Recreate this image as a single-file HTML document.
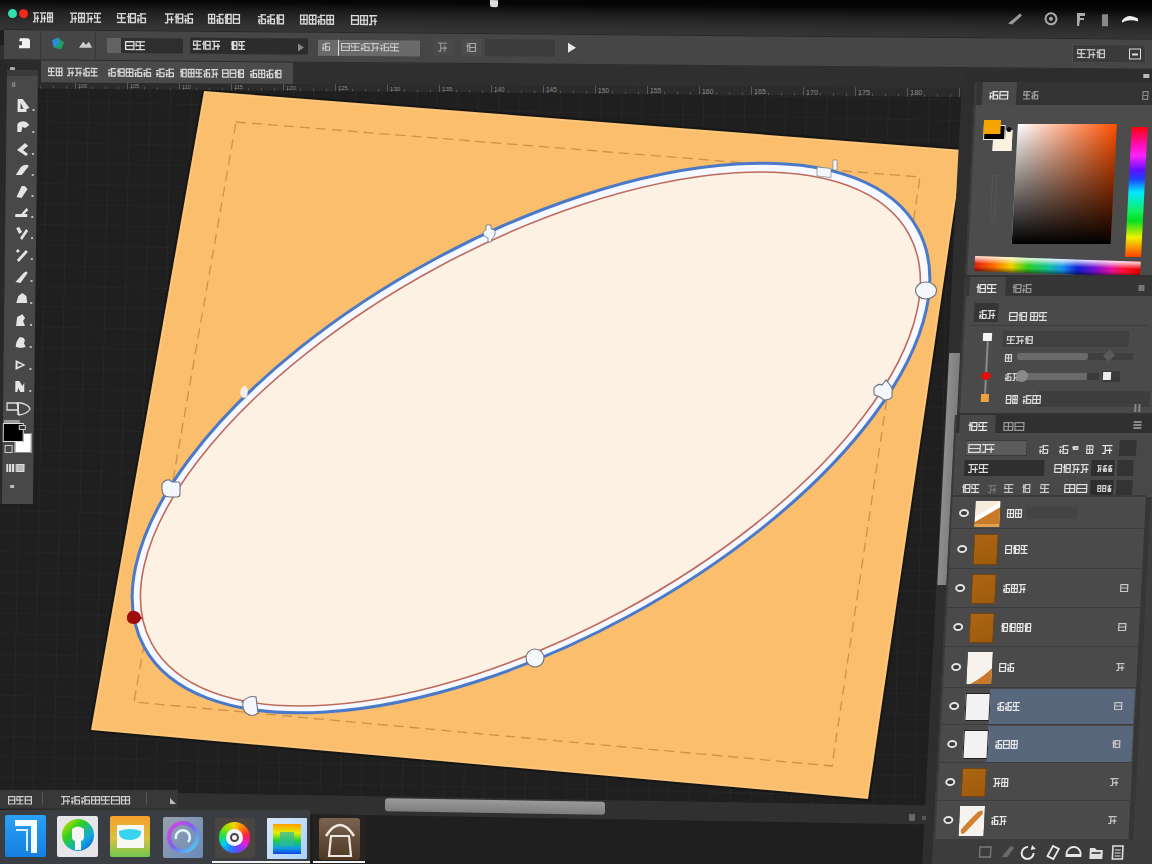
<!DOCTYPE html>
<html><head><meta charset="utf-8">
<style>
*{margin:0;padding:0;box-sizing:border-box}
html,body{width:1152px;height:864px;overflow:hidden;background:#1f1f1f;font-family:"Liberation Sans",sans-serif;color:#ddd}
.a{position:absolute}
.t{position:absolute;font-size:10px;font-weight:bold;color:#d8d8d8;white-space:nowrap;line-height:12px;letter-spacing:-0.2px}
</style></head><body>
<!-- canvas svg -->
<svg class="a" style="left:0;top:0" width="1152" height="864" viewBox="0 0 1152 864">
  <defs>
    <pattern id="grid" width="20.5" height="20.5" patternUnits="userSpaceOnUse" x="9.2" y="19" patternTransform="rotate(1.2)">
      <path d="M20.5 0V20.5M0 20.5H20.5" stroke="#2a2a2a" stroke-width="1.2" fill="none"/>
    </pattern>
  </defs>
  <rect x="0" y="0" width="1152" height="864" fill="#1f1f1f"/>
  <rect x="0" y="90" width="968" height="720" fill="url(#grid)"/>
  <!-- orange paper -->
  <polygon points="204,91 963,150 868,799 91,730" fill="none" stroke="#161616" stroke-width="4"/>
  <polygon points="204,91 963,150 868,799 91,730" fill="#fabe6c"/>
  <polygon points="205,92.5 961.5,151.3 866.8,797.6 92.6,729" fill="none" stroke="#fdd08c" stroke-width="1" stroke-opacity="0.7"/>
  <polygon points="236,122 920,177 832,766 134,702" fill="none" stroke="#c88845" stroke-width="1.3" stroke-dasharray="10,6" stroke-opacity="0.85"/>
  <!-- ellipse -->
  <g transform="translate(531,438) rotate(-28.35)">
    <ellipse cx="0" cy="0" rx="439.7" ry="203.1" fill="#f6f9ff" stroke="#4a79c9" stroke-width="3"/>
    <ellipse cx="-1" cy="0.6" rx="430.4" ry="195.2" fill="#fdf1e3" stroke="#c06a5c" stroke-width="1.6"/>
  </g>
  <!-- handles -->
  <g fill="#f4f8fd" stroke="#6d7280" stroke-width="1.1">
    <ellipse cx="926" cy="290.5" rx="10.5" ry="8.5"/>
    <circle cx="535" cy="658" r="9"/>
    <path d="M242,702 q7,-7 14,-5 l2,16 q-6,5 -12,0 q-4,-4 -3,-11 z"/>
    <path d="M162,484 q3,-5 8,-4 q1,2 3,2 h5 q2,0 2,2 v10 q0,3 -3,3 h-7 q-8,0 -8,-8 z"/>
    <path d="M874,388 q4,-5 8,-3 l4,-5 l4,5 q3,3 2,8 l0,4 q-2,3 -8,3 q-4,-3 -6,-4 q-4,0 -4,-3 z"/>
    <path d="M486,225 h5 v4 l4,1 v5 l-3,4 l-1,3 h-3 l0,-4 l-4,-2 l-1,-4 l3,-2 z" stroke-width="0.8"/>
    <path d="M241,389 l4,-4 l3,5 l-1,7 l-4,1 l-3,-4 z" stroke="none" fill="#f2eee8"/>
    <path d="M817,167 l14,1.5 l0,9 l-14,-1.5 z" stroke-width="0.6"/>
    <path d="M833,160 l4,0 l0,10 l-4,0 z" stroke-width="0.6"/>
  </g>
  <path d="M127,616 q2,-6 8,-5 q5,1 6,6 l2,1 l-2,1 q-2,5 -7,5 q-8,0 -7,-8 z" fill="#a00c0c"/>
</svg>

<!-- tab row + ruler (skewed) -->
<div class="a" style="left:0;top:0;width:1152px;height:100px;transform:skewY(0.55deg);transform-origin:0 0">
<div class="a" style="left:0;top:45px;width:1152px;height:37px;background:#2f2f2f"></div>
<div class="a" style="left:0;top:59px;width:41px;height:23px;background:#2a2a2a"></div>
<div class="a" style="left:41px;top:59px;width:252px;height:23px;background:#4a4a4a"></div>
<svg class="a" style="left:48px;top:66.5px;overflow:visible" width="15" height="8"><path d="M0.6,0.6H6.2M1.1,4.2H5.8M0.6,8.0H6.2M3.4,0.6V8.0M0.6,2.2V4.4M8.3,0.6H14.0M8.3,8.0H14.0M8.3,0.6V8.0M14.0,0.6V8.0M8.3,4.2H14.0M11.2,0.6V8.0" fill="none" stroke="#d8d8d8" stroke-width="1.21" stroke-opacity="1.0" stroke-linecap="square"/></svg><svg class="a" style="left:67px;top:66.5px;overflow:visible" width="31" height="8"><path d="M0.6,0.6H6.4M2.1,0.6V8.0M5.2,3.1V8.0M2.1,5.1H6.4M0.6,8.0H2.1M8.5,0.6H14.2M10.0,0.6V8.0M13.1,3.1V8.0M10.0,5.1H14.2M8.5,8.0H10.0M16.4,2.1H17.6M16.4,5.9H17.6M17.0,4.2V8.0M18.6,0.6H22.2M19.1,0.6V8.0M18.6,4.2H22.2M22.2,4.2V8.0M18.6,8.0H22.2M24.3,0.6H30.1M24.8,4.2H29.6M24.3,8.0H30.1M27.2,0.6V8.0M24.3,2.2V4.4" fill="none" stroke="#d8d8d8" stroke-width="1.21" stroke-opacity="1.0" stroke-linecap="square"/></svg><svg class="a" style="left:107.7px;top:66.5px;overflow:visible" width="43" height="8"><path d="M0.6,2.1H2.1M0.6,5.9H2.1M1.1,4.2V8.0M3.1,0.6H7.2M3.6,0.6V8.0M3.1,4.2H7.2M7.2,4.2V8.0M3.1,8.0H7.2M10.2,0.6V8.0M9.4,3.0H10.8M11.8,0.6H16.1M11.8,8.0H16.1M11.8,0.6V8.0M16.1,0.6V8.0M11.8,4.2H16.1M18.2,0.6H24.9M18.2,8.0H24.9M18.2,0.6V8.0M24.9,0.6V8.0M18.2,4.2H24.9M21.5,0.6V8.0M27.0,2.1H28.5M27.0,5.9H28.5M27.6,4.2V8.0M29.5,0.6H33.7M30.0,0.6V8.0M29.5,4.2H33.7M33.7,4.2V8.0M29.5,8.0H33.7M35.8,2.1H37.3M35.8,5.9H37.3M36.4,4.2V8.0M38.3,0.6H42.5M38.8,0.6V8.0M38.3,4.2H42.5M42.5,4.2V8.0M38.3,8.0H42.5" fill="none" stroke="#d8d8d8" stroke-width="1.21" stroke-opacity="1.0" stroke-linecap="square"/></svg><svg class="a" style="left:156px;top:66.5px;overflow:visible" width="18" height="8"><path d="M0.6,2.1H2.4M0.6,5.9H2.4M1.1,4.2V8.0M3.4,0.6H8.0M3.9,0.6V8.0M3.4,4.2H8.0M8.0,4.2V8.0M3.4,8.0H8.0M10.1,2.1H11.9M10.1,5.9H11.9M10.7,4.2V8.0M12.9,0.6H17.4M13.4,0.6V8.0M12.9,4.2H17.4M17.4,4.2V8.0M12.9,8.0H17.4" fill="none" stroke="#d8d8d8" stroke-width="1.21" stroke-opacity="1.0" stroke-linecap="square"/></svg><svg class="a" style="left:180px;top:66.5px;overflow:visible" width="38" height="8"><path d="M1.2,0.6V8.0M0.6,3.0H1.6M2.6,0.6H6.2M2.6,8.0H6.2M2.6,0.6V8.0M6.2,0.6V8.0M2.6,4.2H6.2M8.3,0.6H14.0M8.3,8.0H14.0M8.3,0.6V8.0M14.0,0.6V8.0M8.3,4.2H14.0M11.2,0.6V8.0M16.1,0.6H21.8M16.6,4.2H21.3M16.1,8.0H21.8M19.0,0.6V8.0M16.1,2.2V4.4M23.9,2.1H25.1M23.9,5.9H25.1M24.6,4.2V8.0M26.1,0.6H29.6M26.6,0.6V8.0M26.1,4.2H29.6M29.6,4.2V8.0M26.1,8.0H29.6M31.8,0.6H37.5M33.2,0.6V8.0M36.3,3.1V8.0M33.2,5.1H37.5M31.8,8.0H33.2" fill="none" stroke="#d8d8d8" stroke-width="1.21" stroke-opacity="1.0" stroke-linecap="square"/></svg><svg class="a" style="left:222px;top:66.5px;overflow:visible" width="22" height="8"><path d="M0.6,0.6H6.1M0.6,8.0H6.1M0.6,0.6V8.0M6.1,0.6V8.0M0.6,4.2H6.1M8.2,0.6H13.8M8.2,8.0H13.8M8.2,0.6V8.0M13.8,0.6V8.0M8.2,4.2H13.8M16.5,0.6V8.0M15.9,3.0H16.9M17.9,0.6H21.4M17.9,8.0H21.4M17.9,0.6V8.0M21.4,0.6V8.0M17.9,4.2H21.4" fill="none" stroke="#d8d8d8" stroke-width="1.21" stroke-opacity="1.0" stroke-linecap="square"/></svg><svg class="a" style="left:250px;top:66.5px;overflow:visible" width="32" height="8"><path d="M0.6,2.1H1.9M0.6,5.9H1.9M1.1,4.2V8.0M2.9,0.6H6.6M3.4,0.6V8.0M2.9,4.2H6.6M6.6,4.2V8.0M2.9,8.0H6.6M8.7,0.6H14.7M8.7,8.0H14.7M8.7,0.6V8.0M14.7,0.6V8.0M8.7,4.2H14.7M11.7,0.6V8.0M16.8,2.1H18.1M16.8,5.9H18.1M17.4,4.2V8.0M19.1,0.6H22.8M19.6,0.6V8.0M19.1,4.2H22.8M22.8,4.2V8.0M19.1,8.0H22.8M25.7,0.6V8.0M24.9,3.0H26.1M27.1,0.6H30.9M27.1,8.0H30.9M27.1,0.6V8.0M30.9,0.6V8.0M27.1,4.2H30.9" fill="none" stroke="#d8d8d8" stroke-width="1.21" stroke-opacity="1.0" stroke-linecap="square"/></svg>
<div class="a" style="left:10px;top:67px;width:5px;height:5px;background:#aaa"></div>
</div>
<svg class="a" style="left:0;top:0" width="1152" height="110"><polygon points="38,82.5 968,88.0 968,97.0 38,88.5" fill="#2b2b2b"/><path d="M40.5,86.0V88.5M53.5,86.1V88.6M66.5,86.3V88.8M79.5,86.4V88.9M92.5,86.5V89.0M105.5,86.6V89.1M118.5,86.7V89.2M131.5,86.8V89.3M144.5,87.0V89.5M157.5,87.1V89.6M170.5,87.2V89.7M183.5,87.3V89.8M196.5,87.4V89.9M209.5,87.6V90.1M222.5,87.7V90.2M235.5,87.8V90.3M248.5,87.9V90.4M261.5,88.0V90.5M274.5,88.2V90.7M287.5,88.3V90.8M300.5,88.4V90.9M313.5,88.5V91.0M326.5,88.6V91.1M339.5,88.8V91.3M352.5,88.9V91.4M365.5,89.0V91.5M378.5,89.1V91.6M391.5,89.2V91.7M404.5,89.3V91.8M417.5,89.5V92.0M430.5,89.6V92.1M443.5,89.7V92.2M456.5,89.8V92.3M469.5,89.9V92.4M482.5,90.1V92.6M495.5,90.2V92.7M508.5,90.3V92.8M521.5,90.4V92.9M534.5,90.5V93.0M547.5,90.7V93.2M560.5,90.8V93.3M573.5,90.9V93.4M586.5,91.0V93.5M599.5,91.1V93.6M612.5,91.2V93.7M625.5,91.4V93.9M638.5,91.5V94.0M651.5,91.6V94.1M664.5,91.7V94.2M677.5,91.8V94.3M690.5,92.0V94.5M703.5,92.1V94.6M716.5,92.2V94.7M729.5,92.3V94.8M742.5,92.4V94.9M755.5,92.6V95.1M768.5,92.7V95.2M781.5,92.8V95.3M794.5,92.9V95.4M807.5,93.0V95.5M820.5,93.1V95.6M833.5,93.3V95.8M846.5,93.4V95.9M859.5,93.5V96.0M872.5,93.6V96.1M885.5,93.7V96.2M898.5,93.9V96.4M911.5,94.0V96.5M924.5,94.1V96.6M937.5,94.2V96.7M950.5,94.3V96.8M963.5,94.5V97.0" stroke="#505050" stroke-width="1"/><path d="M75.5,82.7V88.8M127.5,83.0V89.3M179.5,83.3V89.8M231.5,83.6V90.3M283.5,83.9V90.7M335.5,84.3V91.2M387.5,84.6V91.7M439.5,84.9V92.2M491.5,85.2V92.6M543.5,85.5V93.1M595.5,85.8V93.6M647.5,86.1V94.1M699.5,86.4V94.5M751.5,86.7V95.0M803.5,87.0V95.5M855.5,87.3V96.0M907.5,87.6V96.4M959.5,87.9V96.9" stroke="#5a5a5a" stroke-width="1"/><text x="78" y="87.8" font-family="Liberation Sans" font-size="5.5" fill="#8a8a8a">100</text><text x="130" y="88.3" font-family="Liberation Sans" font-size="5.5" fill="#8a8a8a">105</text><text x="182" y="88.8" font-family="Liberation Sans" font-size="5.5" fill="#8a8a8a">110</text><text x="234" y="89.3" font-family="Liberation Sans" font-size="5.6" fill="#8a8a8a">115</text><text x="286" y="89.7" font-family="Liberation Sans" font-size="5.8" fill="#8a8a8a">120</text><text x="338" y="90.2" font-family="Liberation Sans" font-size="5.9" fill="#8a8a8a">125</text><text x="390" y="90.7" font-family="Liberation Sans" font-size="6.1" fill="#8a8a8a">130</text><text x="442" y="91.2" font-family="Liberation Sans" font-size="6.2" fill="#8a8a8a">135</text><text x="494" y="91.6" font-family="Liberation Sans" font-size="6.3" fill="#8a8a8a">140</text><text x="546" y="92.1" font-family="Liberation Sans" font-size="6.5" fill="#8a8a8a">145</text><text x="598" y="92.6" font-family="Liberation Sans" font-size="6.6" fill="#8a8a8a">150</text><text x="650" y="93.1" font-family="Liberation Sans" font-size="6.8" fill="#8a8a8a">155</text><text x="702" y="93.5" font-family="Liberation Sans" font-size="6.9" fill="#8a8a8a">160</text><text x="754" y="94.0" font-family="Liberation Sans" font-size="7.1" fill="#8a8a8a">165</text><text x="806" y="94.5" font-family="Liberation Sans" font-size="7.2" fill="#8a8a8a">170</text><text x="858" y="95.0" font-family="Liberation Sans" font-size="7.3" fill="#8a8a8a">175</text><text x="910" y="95.4" font-family="Liberation Sans" font-size="7.5" fill="#8a8a8a">180</text><text x="962" y="95.9" font-family="Liberation Sans" font-size="7.6" fill="#8a8a8a">185</text></svg>
<!-- top group skewed -->
<div class="a" style="left:0;top:0;width:1152px;height:60px;transform:skewY(0.48deg);transform-origin:0 0">
<div class="a" style="left:0;top:-12px;width:1152px;height:42px;background:linear-gradient(#000 0%,#060606 28%,#1e1e1e 52%,#2e2e2e 78%,#363636 100%)"></div>
<div class="a" style="left:7.5px;top:8.5px;width:9px;height:9px;border-radius:50%;background:#2fe0b0"></div>
<div class="a" style="left:19px;top:8.5px;width:9px;height:9px;border-radius:50%;background:#f0281e"></div>
<svg class="a" style="left:33px;top:11.5px;overflow:visible" width="20" height="10"><path d="M0.6,0.6H5.4M1.8,0.6V9.4M4.5,3.6V9.4M1.8,6.0H5.4M0.6,9.4H1.8M7.6,0.6H12.4M8.8,0.6V9.4M11.5,3.6V9.4M8.8,6.0H12.4M7.6,9.4H8.8M14.6,0.6H19.4M14.6,9.4H19.4M14.6,0.6V9.4M19.4,0.6V9.4M14.6,5.0H19.4M17.0,0.6V9.4" fill="none" stroke="#d8d8d8" stroke-width="1.37" stroke-opacity="1.0" stroke-linecap="square"/></svg>
<svg class="a" style="left:70px;top:11.5px;overflow:visible" width="31" height="10"><path d="M0.6,0.6H6.4M2.1,0.6V9.4M5.2,3.6V9.4M2.1,6.0H6.4M0.6,9.4H2.1M8.6,0.6H14.4M8.6,9.4H14.4M8.6,0.6V9.4M14.4,0.6V9.4M8.6,5.0H14.4M11.5,0.6V9.4M16.6,0.6H22.4M18.1,0.6V9.4M21.2,3.6V9.4M18.1,6.0H22.4M16.6,9.4H18.1M24.6,0.6H30.4M25.1,5.0H29.9M24.6,9.4H30.4M27.5,0.6V9.4M24.6,2.6V5.1" fill="none" stroke="#d8d8d8" stroke-width="1.37" stroke-opacity="1.0" stroke-linecap="square"/></svg>
<svg class="a" style="left:117px;top:11.5px;overflow:visible" width="29" height="10"><path d="M0.6,0.6H8.4M1.1,5.0H7.9M0.6,9.4H8.4M4.5,0.6V9.4M0.6,2.6V5.1M11.6,0.6V9.4M10.6,3.5H12.4M13.4,0.6H18.4M13.4,9.4H18.4M13.4,0.6V9.4M18.4,0.6V9.4M13.4,5.0H18.4M20.6,2.5H22.6M20.6,7.0H22.6M21.2,5.0V9.4M23.6,0.6H28.4M24.1,0.6V9.4M23.6,5.0H28.4M28.4,5.0V9.4M23.6,9.4H28.4" fill="none" stroke="#d8d8d8" stroke-width="1.37" stroke-opacity="1.0" stroke-linecap="square"/></svg>
<svg class="a" style="left:165px;top:11.5px;overflow:visible" width="28" height="10"><path d="M0.6,0.6H8.0M2.6,0.6V9.4M6.5,3.6V9.4M2.6,6.0H8.0M0.6,9.4H2.6M11.2,0.6V9.4M10.3,3.5H12.0M13.0,0.6H17.7M13.0,9.4H17.7M13.0,0.6V9.4M17.7,0.6V9.4M13.0,5.0H17.7M20.0,2.5H21.8M20.0,7.0H21.8M20.6,5.0V9.4M22.8,0.6H27.4M23.3,0.6V9.4M22.8,5.0H27.4M27.4,5.0V9.4M22.8,9.4H27.4" fill="none" stroke="#d8d8d8" stroke-width="1.37" stroke-opacity="1.0" stroke-linecap="square"/></svg>
<svg class="a" style="left:208px;top:11.5px;overflow:visible" width="32" height="10"><path d="M0.6,0.6H6.6M0.6,9.4H6.6M0.6,0.6V9.4M6.6,0.6V9.4M0.6,5.0H6.6M3.6,0.6V9.4M8.9,2.5H10.2M8.9,7.0H10.2M9.5,5.0V9.4M11.2,0.6H14.9M11.7,0.6V9.4M11.2,5.0H14.9M14.9,5.0V9.4M11.2,9.4H14.9M17.8,0.6V9.4M17.1,3.5H18.3M19.3,0.6H23.1M19.3,9.4H23.1M19.3,0.6V9.4M23.1,0.6V9.4M19.3,5.0H23.1M25.4,0.6H31.4M25.4,9.4H31.4M25.4,0.6V9.4M31.4,0.6V9.4M25.4,5.0H31.4" fill="none" stroke="#d8d8d8" stroke-width="1.37" stroke-opacity="1.0" stroke-linecap="square"/></svg>
<svg class="a" style="left:258px;top:11.5px;overflow:visible" width="26" height="10"><path d="M0.6,2.5H2.2M0.6,7.0H2.2M1.2,5.0V9.4M3.2,0.6H7.4M3.7,0.6V9.4M3.2,5.0H7.4M7.4,5.0V9.4M3.2,9.4H7.4M9.6,2.5H11.2M9.6,7.0H11.2M10.2,5.0V9.4M12.2,0.6H16.4M12.7,0.6V9.4M12.2,5.0H16.4M16.4,5.0V9.4M12.2,9.4H16.4M19.4,0.6V9.4M18.6,3.5H20.0M21.0,0.6H25.4M21.0,9.4H25.4M21.0,0.6V9.4M25.4,0.6V9.4M21.0,5.0H25.4" fill="none" stroke="#d8d8d8" stroke-width="1.37" stroke-opacity="1.0" stroke-linecap="square"/></svg>
<svg class="a" style="left:300px;top:11.5px;overflow:visible" width="34" height="10"><path d="M0.6,0.6H7.1M0.6,9.4H7.1M0.6,0.6V9.4M7.1,0.6V9.4M0.6,5.0H7.1M3.9,0.6V9.4M9.4,0.6H15.9M9.4,9.4H15.9M9.4,0.6V9.4M15.9,0.6V9.4M9.4,5.0H15.9M12.6,0.6V9.4M18.1,2.5H19.6M18.1,7.0H19.6M18.7,5.0V9.4M20.6,0.6H24.6M21.1,0.6V9.4M20.6,5.0H24.6M24.6,5.0V9.4M20.6,9.4H24.6M26.9,0.6H33.4M26.9,9.4H33.4M26.9,0.6V9.4M33.4,0.6V9.4M26.9,5.0H33.4M30.1,0.6V9.4" fill="none" stroke="#d8d8d8" stroke-width="1.37" stroke-opacity="1.0" stroke-linecap="square"/></svg>
<svg class="a" style="left:351px;top:11.5px;overflow:visible" width="26" height="10"><path d="M0.6,0.6H7.4M0.6,9.4H7.4M0.6,0.6V9.4M7.4,0.6V9.4M0.6,5.0H7.4M9.6,0.6H16.4M9.6,9.4H16.4M9.6,0.6V9.4M16.4,0.6V9.4M9.6,5.0H16.4M13.0,0.6V9.4M18.6,0.6H25.4M20.4,0.6V9.4M24.0,3.6V9.4M20.4,6.0H25.4M18.6,9.4H20.4" fill="none" stroke="#d8d8d8" stroke-width="1.37" stroke-opacity="1.0" stroke-linecap="square"/></svg>
<div class="a" style="left:490px;top:-4px;width:8px;height:7px;background:#ddd;border-radius:0 0 2px 2px"></div>
<svg class="a" style="left:1000px;top:-1px" width="150" height="22" viewBox="0 0 150 22">
 <path d="M8,16 L20,6 L22,8 L12,17 Z" fill="#9a9a9a"/>
 <circle cx="51" cy="11" r="5.5" fill="none" stroke="#aaa" stroke-width="2"/><circle cx="51" cy="11" r="2" fill="#aaa"/>
 <path d="M77,5 h8 v3 h-5 v2 h4 v2 h-4 l-1,6 h-2 z" fill="#aaa"/>
 <rect x="102" y="6" width="6" height="12" fill="#888"/>
 <path d="M122,12 q6,-8 16,-2 v3 q-8,-3 -16,1 z" fill="#eee"/>
</svg>
<div class="a" style="left:4px;top:29px;width:1148px;height:31px;background:#464646;border-top:1px solid #282828;border-bottom:1px solid #2c2c2c"></div>
<div class="a" style="left:40px;top:31px;width:1px;height:26px;background:#363636"></div>
<div class="a" style="left:95px;top:31px;width:1px;height:26px;background:#363636"></div>
<svg class="a" style="left:14px;top:34px" width="90" height="20" viewBox="0 0 90 20">
 <path d="M6,4 h7 q3,0 3,3 v7 h-11 v-3 h3 v-4 h-3 z" fill="#f2f2f2"/>
 <path d="M38,6 l6,-3 l6,5 l-3,7 l-7,-2 z" fill="#1fa060"/><path d="M38,6 l6,-3 l2,6 l-6,4 z" fill="#2a8ad8"/>
 <path d="M65,13 l4,-6 l3,3 l3,-3 l3,6 z" fill="#ccc"/>
</svg>
<div class="a" style="left:107px;top:37px;width:14px;height:15px;background:#626262"></div>
<div class="a" style="left:121px;top:37px;width:62px;height:15px;background:#2e2e2e"></div>
<svg class="a" style="left:125px;top:40px;overflow:visible" width="20" height="9"><path d="M0.6,0.6H8.9M0.6,8.4H8.9M0.6,0.6V8.4M8.9,0.6V8.4M0.6,4.5H8.9M11.1,0.6H19.4M11.6,4.5H18.9M11.1,8.4H19.4M15.2,0.6V8.4M11.1,2.4V4.6" fill="none" stroke="#dcdcdc" stroke-width="1.31" stroke-opacity="1.0" stroke-linecap="square"/></svg>
<div class="a" style="left:190px;top:36px;width:118px;height:16px;background:#2c2c2c"></div>
<svg class="a" style="left:193px;top:38.5px;overflow:visible" width="27" height="9"><path d="M0.6,0.6H7.7M1.1,4.5H7.2M0.6,8.4H7.7M4.2,0.6V8.4M0.6,2.4V4.6M10.8,0.6V8.4M9.9,3.1H11.5M12.5,0.6H17.1M12.5,8.4H17.1M12.5,0.6V8.4M17.1,0.6V8.4M12.5,4.5H17.1M19.3,0.6H26.4M21.2,0.6V8.4M24.9,3.3V8.4M21.2,5.4H26.4M19.3,8.4H21.2" fill="none" stroke="#dcdcdc" stroke-width="1.31" stroke-opacity="1.0" stroke-linecap="square"/></svg><svg class="a" style="left:231px;top:38.5px;overflow:visible" width="14" height="9"><path d="M1.2,0.6V8.4M0.6,3.1H1.5M2.5,0.6H5.9M2.5,8.4H5.9M2.5,0.6V8.4M5.9,0.6V8.4M2.5,4.5H5.9M8.1,0.6H13.4M8.6,4.5H12.9M8.1,8.4H13.4M10.8,0.6V8.4M8.1,2.4V4.6" fill="none" stroke="#dcdcdc" stroke-width="1.31" stroke-opacity="1.0" stroke-linecap="square"/></svg>
<svg class="a" style="left:298px;top:41px" width="6" height="8"><path d="M0,0 L6,4 L0,8 Z" fill="#888"/></svg>
<div class="a" style="left:318px;top:37px;width:102px;height:16px;background:#6a6a6a"></div>
<div class="a" style="left:338px;top:37px;width:1px;height:16px;background:#ddd"></div>
<svg class="a" style="left:322px;top:40px;overflow:visible" width="8" height="8"><path d="M0.5,2.0H2.2M0.5,5.6H2.2M1.1,4.0V7.5M3.2,0.5H7.5M3.7,0.5V7.5M3.2,4.0H7.5M7.5,4.0V7.5M3.2,7.5H7.5" fill="none" stroke="#ccc" stroke-width="1.10" stroke-opacity="1.0" stroke-linecap="square"/></svg><svg class="a" style="left:341px;top:39.5px;overflow:visible" width="58" height="8"><path d="M0.5,0.5H8.3M0.5,7.5H8.3M0.5,0.5V7.5M8.3,0.5V7.5M0.5,4.0H8.3M10.3,0.5H18.2M10.8,4.0H17.7M10.3,7.5H18.2M14.2,0.5V7.5M10.3,2.1V4.1M20.2,2.0H22.2M20.2,5.6H22.2M20.8,4.0V7.5M23.2,0.5H28.0M23.7,0.5V7.5M23.2,4.0H28.0M28.0,4.0V7.5M23.2,7.5H28.0M30.0,0.5H37.8M32.1,0.5V7.5M36.1,2.9V7.5M32.1,4.8H37.8M30.0,7.5H32.1M39.8,2.0H41.9M39.8,5.6H41.9M40.4,4.0V7.5M42.9,0.5H47.7M43.4,0.5V7.5M42.9,4.0H47.7M47.7,4.0V7.5M42.9,7.5H47.7M49.7,0.5H57.5M50.2,4.0H57.0M49.7,7.5H57.5M53.6,0.5V7.5M49.7,2.1V4.1" fill="none" stroke="#c8c8c8" stroke-width="1.10" stroke-opacity="1.0" stroke-linecap="square"/></svg>
<div class="a" style="left:433px;top:35px;width:22px;height:17px;background:#4a4a4a"></div>
<div class="a" style="left:462px;top:35px;width:20px;height:17px;background:#4c4c4c"></div>
<div class="a" style="left:485px;top:35px;width:70px;height:17px;background:#3c3c3c"></div>
<svg class="a" style="left:438px;top:39px;overflow:visible" width="9" height="9"><path d="M0.5,0.5H8.5M2.7,0.5V8.5M6.8,3.2V8.5M2.7,5.4H8.5M0.5,8.5H2.7" fill="none" stroke="#999" stroke-width="1.10" stroke-opacity="1.0" stroke-linecap="square"/></svg>
<svg class="a" style="left:466px;top:39px;overflow:visible" width="10" height="9"><path d="M1.8,0.5V8.5M0.5,3.1H2.8M3.8,0.5H9.5M3.8,8.5H9.5M3.8,0.5V8.5M9.5,0.5V8.5M3.8,4.5H9.5" fill="none" stroke="#aaa" stroke-width="1.10" stroke-opacity="1.0" stroke-linecap="square"/></svg>
<svg class="a" style="left:567px;top:37px" width="10" height="12"><path d="M1,1 L9,6 L1,11 Z" fill="#e8e8e8"/></svg>
<div class="a" style="left:1072px;top:35px;width:74px;height:19px;background:#3a3a3a;border:1px solid #4e4e4e"></div>
<svg class="a" style="left:1077px;top:39.5px;overflow:visible" width="28" height="9"><path d="M0.6,0.6H8.1M1.1,4.5H7.6M0.6,8.4H8.1M4.3,0.6V8.4M0.6,2.4V4.6M10.2,0.6H17.8M12.3,0.6V8.4M16.2,3.2V8.4M12.3,5.4H17.8M10.2,8.4H12.3M20.9,0.6V8.4M19.9,3.1H21.6M22.6,0.6H27.4M22.6,8.4H27.4M22.6,0.6V8.4M27.4,0.6V8.4M22.6,4.5H27.4" fill="none" stroke="#ccc" stroke-width="1.21" stroke-opacity="1.0" stroke-linecap="square"/></svg>
<div class="a" style="left:1129px;top:39px;width:12px;height:11px;border:1.5px solid #ddd"></div>
<div class="a" style="left:1132px;top:44px;width:6px;height:1.5px;background:#ddd"></div>
</div>
<div class="a" style="left:0;top:62px;width:7px;height:442px;background:#282828"></div>
<div class="a" style="left:7px;top:70px;width:31px;height:434px;transform:skewX(-0.67deg);transform-origin:0 0">
<div class="a" style="left:0;top:0;width:31px;height:434px;background:#484848"></div>
<div class="a" style="left:0;top:0;width:31px;height:6px;background:#3a3a3a"></div>
<div class="t" style="left:5px;top:9px;color:#999;font-size:7px">II</div>
<svg class="a" style="left:9px;top:27px" width="22" height="17"><path d="M2,2 h5 l7,9 l-3,1 v3 h-9 z M5,6 v6 h3 z" fill="#e4e4e4" fill-rule="evenodd"/><rect x="17" y="12" width="2" height="2" fill="#bbb"/></svg>
<svg class="a" style="left:9px;top:49px" width="22" height="17"><path d="M2,5 q3,-4 9,-2 l3,3 l-4,3 l-3,-1 l-1,5 h-4 z" fill="#e4e4e4" fill-rule="evenodd"/><rect x="17" y="12" width="2" height="2" fill="#bbb"/></svg>
<svg class="a" style="left:9px;top:71px" width="22" height="17"><path d="M2,9 l8,-7 l3,3 l-5,4 l5,4 l-2,2 z" fill="#e4e4e4" fill-rule="evenodd"/><rect x="17" y="12" width="2" height="2" fill="#bbb"/></svg>
<svg class="a" style="left:9px;top:92px" width="22" height="17"><path d="M1,13 l5,-8 q5,-4 8,-1 l-7,9 z" fill="#e4e4e4" fill-rule="evenodd"/><rect x="17" y="12" width="2" height="2" fill="#bbb"/></svg>
<svg class="a" style="left:9px;top:113px" width="22" height="17"><path d="M2,14 l5,-11 l3,0 l3,3 l-6,9 z M8,5 l2,6" fill="#e4e4e4" fill-rule="evenodd"/><rect x="17" y="12" width="2" height="2" fill="#bbb"/></svg>
<svg class="a" style="left:9px;top:134px" width="22" height="17"><path d="M1,10 h6 l5,-6 l2,2 l-4,4 h3 v3 h-12 z" fill="#e4e4e4" fill-rule="evenodd"/><rect x="17" y="12" width="2" height="2" fill="#bbb"/></svg>
<svg class="a" style="left:9px;top:155px" width="22" height="17"><path d="M2,3 l3,-1 l3,5 l-3,2 z M6,13 l6,-9 l2,2 l-6,9 z" fill="#e4e4e4" fill-rule="evenodd"/><rect x="17" y="12" width="2" height="2" fill="#bbb"/></svg>
<svg class="a" style="left:9px;top:176px" width="22" height="17"><path d="M2,5 l2,-2 l2,2 l-2,2 z M3,14 l9,-10 l2,2 l-9,10 z" fill="#e4e4e4" fill-rule="evenodd"/><rect x="17" y="12" width="2" height="2" fill="#bbb"/></svg>
<svg class="a" style="left:9px;top:198px" width="22" height="17"><path d="M2,14 l8,-9 q3,-3 4,0 l-7,10 z" fill="#e4e4e4" fill-rule="evenodd"/><rect x="17" y="12" width="2" height="2" fill="#bbb"/></svg>
<svg class="a" style="left:9px;top:220px" width="22" height="17"><path d="M3,13 l2,-7 l4,-3 l4,3 l1,7 z" fill="#e4e4e4" fill-rule="evenodd"/><rect x="17" y="12" width="2" height="2" fill="#bbb"/></svg>
<svg class="a" style="left:9px;top:242px" width="22" height="17"><path d="M3,14 l1,-9 l4,-2 l1,-1 l3,4 l-2,3 l2,5 z" fill="#e4e4e4" fill-rule="evenodd"/><rect x="17" y="12" width="2" height="2" fill="#bbb"/></svg>
<svg class="a" style="left:9px;top:264px" width="22" height="17"><path d="M3,13 q0,-6 4,-10 l4,1 q2,3 0,5 l2,4 l-5,1 z" fill="#e4e4e4" fill-rule="evenodd"/><rect x="17" y="12" width="2" height="2" fill="#bbb"/></svg>
<svg class="a" style="left:9px;top:286px" width="22" height="17"><path d="M3,4 l10,5 l-10,5 z M5,7 v4 l5,-2 z" fill="#e4e4e4" fill-rule="evenodd"/><rect x="17" y="12" width="2" height="2" fill="#bbb"/></svg>
<svg class="a" style="left:9px;top:308px" width="22" height="17"><path d="M3,3 h4 l3,5 l2,-3 v9 h-4 l-2,-4 l-1,4 h-2 z" fill="#e4e4e4" fill-rule="evenodd"/><rect x="17" y="12" width="2" height="2" fill="#bbb"/></svg>
<svg class="a" style="left:0px;top:330px" width="31" height="20"><rect x="4" y="3" width="11" height="7" fill="none" stroke="#ddd" stroke-width="1.3"/><path d="M14,3 h4 q8,2 9,6 q-3,5 -11,6 z" fill="none" stroke="#ddd" stroke-width="1.3"/><path d="M15,4 v11" stroke="#ddd" stroke-width="1.5"/></svg>
<div class="a" style="left:1px;top:350px;width:16px;height:4px;background:#999"></div>
<div class="a" style="left:12px;top:363px;width:17px;height:20px;background:#fff;border:1px solid #888"></div>
<div class="a" style="left:0px;top:353px;width:21px;height:19px;background:#000;border:1.5px solid #ddd"></div>
<div class="a" style="left:16px;top:355px;width:7px;height:5px;border:1px solid #ccc;background:#333"></div>
<div class="a" style="left:2px;top:375px;width:8px;height:8px;border:1px solid #ccc"></div>
<div class="a" style="left:4px;top:394px;width:9px;height:8px;background:repeating-linear-gradient(90deg,#ddd 0,#ddd 2px,#666 2px,#666 3px)"></div>
<div class="a" style="left:14px;top:394px;width:8px;height:8px;background:#bbb;border:1px solid #ddd"></div>
<div class="a" style="left:8px;top:415px;width:4px;height:3px;background:#bbb"></div>
</div>

<!-- right column -->
<div class="a" style="left:964px;top:69px;width:188px;height:795px;background:#2d2d2d"></div>
<div class="a" id="rp" style="left:940px;top:62px;width:260px;height:802px;transform:skewX(-2.92deg);transform-origin:0 0">
  <!-- canvas v-scroll track -->
  <div class="a" style="left:23px;top:20px;width:14px;height:782px;background:#2e2e2e"></div>
  <div class="a" style="left:24px;top:291px;width:11px;height:232px;background:linear-gradient(90deg,#8e8e8e,#7c7c7c)"></div>
  <div class="a" style="left:204px;top:12px;width:6px;height:4px;background:#bbb"></div>
  <!-- COLOR panel -->
  <div class="a" style="left:36px;top:20px;width:230px;height:193px;background:#4c4c4c;border-left:2px solid #3a3a3a"></div>
  <div class="a" style="left:38px;top:20px;width:230px;height:23px;background:#333"></div>
  <div class="a" style="left:44px;top:20px;width:34px;height:23px;background:#494949"></div>
  <svg class="a" style="left:50.5px;top:29px;overflow:visible" width="19" height="8"><path d="M0.6,2.1H2.6M0.6,5.9H2.6M1.1,4.2V8.0M3.6,0.6H8.4M4.1,0.6V8.0M3.6,4.2H8.4M8.4,4.2V8.0M3.6,8.0H8.4M10.6,0.6H18.4M10.6,8.0H18.4M10.6,0.6V8.0M18.4,0.6V8.0M10.6,4.2H18.4" fill="none" stroke="#e8e8e8" stroke-width="1.21" stroke-opacity="1.0" stroke-linecap="square"/></svg>
  <svg class="a" style="left:84.5px;top:29px;overflow:visible" width="15" height="8"><path d="M0.6,0.6H6.5M1.1,4.2H6.0M0.6,8.0H6.5M3.5,0.6V8.0M0.6,2.2V4.4M8.6,2.1H9.8M8.6,5.9H9.8M9.2,4.2V8.0M10.8,0.6H14.4M11.3,0.6V8.0M10.8,4.2H14.4M14.4,4.2V8.0M10.8,8.0H14.4" fill="none" stroke="#a0a0a0" stroke-width="1.21" stroke-opacity="1.0" stroke-linecap="square"/></svg>
  <svg class="a" style="left:204px;top:29px;overflow:visible" width="6" height="9"><path d="M0.6,0.6H5.5M0.6,8.4H5.5M0.6,0.6V8.4M5.5,0.6V8.4M0.6,4.5H5.5" fill="none" stroke="#888" stroke-width="1.21" stroke-opacity="1.0" stroke-linecap="square"/></svg>
  <!-- swatches -->
  <div class="a" style="left:57px;top:68px;width:19px;height:21px;background:#fcf2dc;border:1px solid #f4f4f4"></div>
  <div class="a" style="left:47px;top:63px;width:22px;height:15px;background:#000;border:1.5px solid #e8e8e8"></div>
  <div class="a" style="left:47px;top:58px;width:17px;height:14px;background:#f5a500"></div>
  <div class="a" style="left:70px;top:65px;width:5px;height:5px;background:#111;border-radius:50%"></div>
  <div class="a" style="left:58px;top:113px;width:5px;height:46px;border:1px solid #555"></div>
  <!-- color field -->
  <div class="a" style="left:81px;top:62px;width:99px;height:120px;background:linear-gradient(to bottom,rgba(0,0,0,0),#000),linear-gradient(to right,#fff,#ff5000)"></div>
  <div class="a" style="left:195px;top:65px;width:16px;height:130px;background:linear-gradient(to bottom,#ff0010 0%,#ff10c0 15%,#ff20ff 22%,#6010ff 33%,#2040ff 40%,#00e8ff 50%,#10f060 65%,#00e020 72%,#f0f000 85%,#ff4000 100%)"></div>
  <div class="a" style="left:45px;top:194px;width:166px;height:15px;transform:skewY(2deg);transform-origin:0 0;background:linear-gradient(to bottom,rgba(255,255,255,0.9) 0%,rgba(255,255,255,0) 50%,rgba(0,0,0,0) 70%,rgba(0,0,0,0.5) 100%),linear-gradient(to right,#e02010 0%,#ff7000 12%,#f0d000 22%,#30d020 32%,#10c0a0 45%,#1890f0 53%,#1020d0 62%,#7010d0 72%,#e010a0 82%,#ff1030 90%,#e00000 100%)"></div>
  <!-- PROPERTIES panel -->
  <div class="a" style="left:36px;top:213px;width:230px;height:2px;background:#333"></div>
  <div class="a" style="left:36px;top:215px;width:230px;height:138px;background:#4a4a4a;border-left:2px solid #3a3a3a"></div>
  <div class="a" style="left:38px;top:215px;width:230px;height:19px;background:#363636"></div>
  <div class="a" style="left:41px;top:215px;width:36px;height:19px;background:#484848"></div>
  <svg class="a" style="left:47.5px;top:222px;overflow:visible" width="20" height="9"><path d="M1.7,0.6V8.4M0.6,3.1H2.6M3.6,0.6H8.9M3.6,8.4H8.9M3.6,0.6V8.4M8.9,0.6V8.4M3.6,4.5H8.9M11.1,0.6H19.4M11.6,4.5H18.9M11.1,8.4H19.4M15.2,0.6V8.4M11.1,2.4V4.6" fill="none" stroke="#e8e8e8" stroke-width="1.21" stroke-opacity="1.0" stroke-linecap="square"/></svg>
  <svg class="a" style="left:83.5px;top:222px;overflow:visible" width="19" height="9"><path d="M1.6,0.6V8.4M0.6,3.1H2.4M3.4,0.6H8.4M3.4,8.4H8.4M3.4,0.6V8.4M8.4,0.6V8.4M3.4,4.5H8.4M10.6,2.2H12.6M10.6,6.3H12.6M11.2,4.5V8.4M13.6,0.6H18.4M14.1,0.6V8.4M13.6,4.5H18.4M18.4,4.5V8.4M13.6,8.4H18.4" fill="none" stroke="#9a9a9a" stroke-width="1.21" stroke-opacity="1.0" stroke-linecap="square"/></svg>
  <div class="a" style="left:47px;top:241px;width:24px;height:19px;background:#353535"></div>
  <svg class="a" style="left:51.5px;top:248px;overflow:visible" width="16" height="9"><path d="M0.6,2.2H2.0M0.6,6.3H2.0M1.1,4.5V8.4M3.0,0.6H7.0M3.5,0.6V8.4M3.0,4.5H7.0M7.0,4.5V8.4M3.0,8.4H7.0M9.1,0.6H15.4M10.8,0.6V8.4M14.1,3.2V8.4M10.8,5.4H15.4M9.1,8.4H10.8" fill="none" stroke="#e0e0e0" stroke-width="1.21" stroke-opacity="1.0" stroke-linecap="square"/></svg>
  <svg class="a" style="left:81.5px;top:250px;overflow:visible" width="18" height="9"><path d="M0.6,0.6H8.0M0.6,8.4H8.0M0.6,0.6V8.4M8.0,0.6V8.4M0.6,4.5H8.0M11.0,0.6V8.4M10.1,3.1H11.7M12.7,0.6H17.4M12.7,8.4H17.4M12.7,0.6V8.4M17.4,0.6V8.4M12.7,4.5H17.4" fill="none" stroke="#e0e0e0" stroke-width="1.21" stroke-opacity="1.0" stroke-linecap="square"/></svg><svg class="a" style="left:102.5px;top:250px;overflow:visible" width="17" height="9"><path d="M0.6,0.6H7.5M0.6,8.4H7.5M0.6,0.6V8.4M7.5,0.6V8.4M0.6,4.5H7.5M4.0,0.6V8.4M9.6,0.6H16.4M10.1,4.5H15.9M9.6,8.4H16.4M13.0,0.6V8.4M9.6,2.4V4.6" fill="none" stroke="#e0e0e0" stroke-width="1.21" stroke-opacity="1.0" stroke-linecap="square"/></svg>
  <div class="a" style="left:42px;top:263px;width:180px;height:1px;background:#3e3e3e"></div>
  <div class="a" style="left:61px;top:278px;width:1.5px;height:60px;background:#8a8a8a"></div>
  <div class="a" style="left:57px;top:271px;width:9px;height:8px;background:#f4f4f4"></div>
  <div class="a" style="left:77px;top:269px;width:126px;height:16px;background:#404040"></div>
  <svg class="a" style="left:81px;top:274px;overflow:visible" width="26" height="8"><path d="M0.6,0.6H7.5M1.1,4.0H7.0M0.6,7.5H7.5M4.0,0.6V7.5M0.6,2.2V4.2M9.6,0.6H16.4M11.4,0.6V7.5M15.0,3.0V7.5M11.4,4.8H16.4M9.6,7.5H11.4M19.4,0.6V7.5M18.6,2.8H20.0M21.0,0.6H25.4M21.0,7.5H25.4M21.0,0.6V7.5M25.4,0.6V7.5M21.0,4.0H25.4" fill="none" stroke="#d8d8d8" stroke-width="1.21" stroke-opacity="1.0" stroke-linecap="square"/></svg>
  <svg class="a" style="left:80px;top:292px;overflow:visible" width="7" height="8"><path d="M0.6,0.6H6.5M0.6,7.5H6.5M0.6,0.6V7.5M6.5,0.6V7.5M0.6,4.0H6.5M3.5,0.6V7.5" fill="none" stroke="#d8d8d8" stroke-width="1.21" stroke-opacity="1.0" stroke-linecap="square"/></svg>
  <div class="a" style="left:92px;top:291px;width:71px;height:7px;background:#6a6a6a;border-radius:3px"></div>
  <div class="a" style="left:163px;top:291px;width:45px;height:7px;background:#3f3f3f"></div>
  <div class="a" style="left:180px;top:289px;width:8px;height:9px;background:#5a5a5a;transform:rotate(45deg)"></div>
  <div class="a" style="left:57px;top:310px;width:10px;height:8px;background:#e01010;border-radius:50%"></div>
  <svg class="a" style="left:80.5px;top:311px;overflow:visible" width="14" height="8"><path d="M0.6,2.0H1.6M0.6,5.6H1.6M1.1,4.0V7.5M2.6,0.6H6.0M3.1,0.6V7.5M2.6,4.0H6.0M6.0,4.0V7.5M2.6,7.5H6.0M8.1,0.6H13.4M9.4,0.6V7.5M12.4,3.0V7.5M9.4,4.8H13.4M8.1,7.5H9.4" fill="none" stroke="#d8d8d8" stroke-width="1.21" stroke-opacity="1.0" stroke-linecap="square"/></svg>
  <div class="a" style="left:100px;top:311px;width:63px;height:7px;background:#6a6a6a"></div>
  <div class="a" style="left:92px;top:308px;width:12px;height:12px;background:#8a8a8a;border-radius:50%"></div>
  <div class="a" style="left:163px;top:311px;width:12px;height:7px;background:#3a3a3a"></div>
  <div class="a" style="left:178px;top:309px;width:18px;height:11px;background:#3a3a3a"></div>
  <div class="a" style="left:179px;top:310px;width:8px;height:8px;background:#eee"></div>
  <div class="a" style="left:58px;top:332px;width:8px;height:8px;background:#f0a040"></div>
  <div class="a" style="left:115px;top:329px;width:112px;height:16px;background:#3e3e3e"></div>
  <svg class="a" style="left:83px;top:333px;overflow:visible" width="12" height="9"><path d="M0.6,0.6H5.0M0.6,8.4H5.0M0.6,0.6V8.4M5.0,0.6V8.4M0.6,4.5H5.0M7.0,0.6H11.4M7.0,8.4H11.4M7.0,0.6V8.4M11.4,0.6V8.4M7.0,4.5H11.4M9.2,0.6V8.4" fill="none" stroke="#e0e0e0" stroke-width="1.21" stroke-opacity="1.0" stroke-linecap="square"/></svg><svg class="a" style="left:100px;top:333px;overflow:visible" width="18" height="9"><path d="M0.6,2.2H2.4M0.6,6.3H2.4M1.1,4.5V8.4M3.4,0.6H8.0M3.9,0.6V8.4M3.4,4.5H8.0M8.0,4.5V8.4M3.4,8.4H8.0M10.1,0.6H17.4M10.1,8.4H17.4M10.1,0.6V8.4M17.4,0.6V8.4M10.1,4.5H17.4M13.8,0.6V8.4" fill="none" stroke="#e0e0e0" stroke-width="1.21" stroke-opacity="1.0" stroke-linecap="square"/></svg>
  <div class="a" style="left:210px;top:223px;width:6px;height:6px;background:#777"></div>
  <div class="a" style="left:212px;top:342px;width:2px;height:8px;background:#888"></div><div class="a" style="left:216px;top:342px;width:2px;height:8px;background:#888"></div>
  <!-- LAYERS panel -->
  <div class="a" style="left:36px;top:351px;width:230px;height:2px;background:#333"></div>
  <div class="a" style="left:33px;top:353px;width:233px;height:449px;background:#484848;border-left:2px solid #3a3a3a"></div>
  <div class="a" style="left:35px;top:353px;width:231px;height:18px;background:#303030"></div>
  <div class="a" style="left:38px;top:353px;width:36px;height:18px;background:#474747"></div>
  <div class="a" style="left:212px;top:359px;width:8px;height:1.5px;background:#888"></div><div class="a" style="left:212px;top:362px;width:8px;height:1.5px;background:#888"></div><div class="a" style="left:212px;top:365px;width:8px;height:1.5px;background:#888"></div>
  <svg class="a" style="left:46.5px;top:360px;overflow:visible" width="19" height="9"><path d="M1.6,0.6V8.4M0.6,3.1H2.4M3.4,0.6H8.4M3.4,8.4H8.4M3.4,0.6V8.4M8.4,0.6V8.4M3.4,4.5H8.4M10.6,0.6H18.4M11.1,4.5H17.9M10.6,8.4H18.4M14.5,0.6V8.4M10.6,2.4V4.6" fill="none" stroke="#e8e8e8" stroke-width="1.21" stroke-opacity="1.0" stroke-linecap="square"/></svg>
  <svg class="a" style="left:81.5px;top:360px;overflow:visible" width="21" height="9"><path d="M0.6,0.6H9.4M0.6,8.4H9.4M0.6,0.6V8.4M9.4,0.6V8.4M0.6,4.5H9.4M5.0,0.6V8.4M11.6,0.6H20.4M11.6,8.4H20.4M11.6,0.6V8.4M20.4,0.6V8.4M11.6,4.5H20.4" fill="none" stroke="#9a9a9a" stroke-width="1.21" stroke-opacity="1.0" stroke-linecap="square"/></svg>
  <div class="a" style="left:45px;top:378px;width:62px;height:16px;background:#5c5c5c;border:1px solid #3a3a3a"></div>
  <svg class="a" style="left:47.5px;top:381.5px;overflow:visible" width="26" height="9"><path d="M0.6,0.6H11.9M0.6,8.4H11.9M0.6,0.6V8.4M11.9,0.6V8.4M0.6,4.5H11.9M14.1,0.6H25.4M17.2,0.6V8.4M22.9,3.2V8.4M17.2,5.4H25.4M14.1,8.4H17.2" fill="none" stroke="#e0e0e0" stroke-width="1.21" stroke-opacity="1.0" stroke-linecap="square"/></svg>
  <svg class="a" style="left:118.5px;top:383px;overflow:visible" width="9" height="9"><path d="M0.6,2.2H2.6M0.6,6.3H2.6M1.1,4.5V8.4M3.6,0.6H8.4M4.1,0.6V8.4M3.6,4.5H8.4M8.4,4.5V8.4M3.6,8.4H8.4" fill="none" stroke="#d8d8d8" stroke-width="1.21" stroke-opacity="1.0" stroke-linecap="square"/></svg><svg class="a" style="left:138.5px;top:383px;overflow:visible" width="9" height="9"><path d="M0.6,2.2H2.6M0.6,6.3H2.6M1.1,4.5V8.4M3.6,0.6H8.4M4.1,0.6V8.4M3.6,4.5H8.4M8.4,4.5V8.4M3.6,8.4H8.4" fill="none" stroke="#d8d8d8" stroke-width="1.21" stroke-opacity="1.0" stroke-linecap="square"/></svg><svg class="a" style="left:152px;top:384px;overflow:visible" width="6" height="4"><path d="M1.1,0.6V3.5M0.6,1.4H1.3M2.3,0.6H5.5M2.3,3.5H5.5M2.3,0.6V3.5M5.5,0.6V3.5M2.3,2.0H5.5" fill="none" stroke="#d8d8d8" stroke-width="1.21" stroke-opacity="1.0" stroke-linecap="square"/></svg><svg class="a" style="left:166px;top:383px;overflow:visible" width="7" height="9"><path d="M0.6,0.6H6.5M0.6,8.4H6.5M0.6,0.6V8.4M6.5,0.6V8.4M0.6,4.5H6.5M3.5,0.6V8.4" fill="none" stroke="#d8d8d8" stroke-width="1.21" stroke-opacity="1.0" stroke-linecap="square"/></svg><svg class="a" style="left:182px;top:383px;overflow:visible" width="10" height="9"><path d="M0.6,0.6H9.4M3.0,0.6V8.4M7.5,3.2V8.4M3.0,5.4H9.4M0.6,8.4H3.0" fill="none" stroke="#e8e8e8" stroke-width="1.21" stroke-opacity="1.0" stroke-linecap="square"/></svg>
  <div class="a" style="left:199px;top:378px;width:17px;height:16px;background:#333"></div>
  <div class="a" style="left:45px;top:398px;width:80px;height:16px;background:#2e2e2e"></div>
  <svg class="a" style="left:48.5px;top:402px;overflow:visible" width="20" height="9"><path d="M0.6,0.6H8.9M2.9,0.6V8.4M7.1,3.2V8.4M2.9,5.4H8.9M0.6,8.4H2.9M11.1,0.6H19.4M11.6,4.5H18.9M11.1,8.4H19.4M15.2,0.6V8.4M11.1,2.4V4.6" fill="none" stroke="#e0e0e0" stroke-width="1.21" stroke-opacity="1.0" stroke-linecap="square"/></svg>
  <svg class="a" style="left:134.5px;top:402px;overflow:visible" width="34" height="9"><path d="M0.6,0.6H7.2M0.6,8.4H7.2M0.6,0.6V8.4M7.2,0.6V8.4M0.6,4.5H7.2M10.1,0.6V8.4M9.3,3.1H10.7M11.7,0.6H15.9M11.7,8.4H15.9M11.7,0.6V8.4M15.9,0.6V8.4M11.7,4.5H15.9M18.1,0.6H24.7M19.8,0.6V8.4M23.3,3.2V8.4M19.8,5.4H24.7M18.1,8.4H19.8M26.8,0.6H33.5M28.6,0.6V8.4M32.1,3.2V8.4M28.6,5.4H33.5M26.8,8.4H28.6" fill="none" stroke="#e0e0e0" stroke-width="1.21" stroke-opacity="1.0" stroke-linecap="square"/></svg>
  <div class="a" style="left:172px;top:398px;width:23px;height:16px;background:#2e2e2e"></div>
  <svg class="a" style="left:177.5px;top:403px;overflow:visible" width="15" height="7"><path d="M0.6,0.6H3.8M1.3,0.6V6.5M3.2,2.7V6.5M1.3,4.2H3.8M0.6,6.5H1.3M5.9,1.8H6.1M5.9,4.9H6.1M6.5,3.5V6.5M7.1,0.6H9.1M7.6,0.6V6.5M7.1,3.5H9.1M9.1,3.5V6.5M7.1,6.5H9.1M11.2,1.8H11.4M11.2,4.9H11.4M11.8,3.5V6.5M12.4,0.6H14.4M12.9,0.6V6.5M12.4,3.5H14.4M14.4,3.5V6.5M12.4,6.5H14.4" fill="none" stroke="#d0d0d0" stroke-width="1.21" stroke-opacity="1.0" stroke-linecap="square"/></svg>
  <div class="a" style="left:198px;top:398px;width:16px;height:16px;background:#333"></div>
  <svg class="a" style="left:43.5px;top:422px;overflow:visible" width="17" height="9"><path d="M1.4,0.6V8.4M0.6,3.1H2.0M3.0,0.6H7.5M3.0,8.4H7.5M3.0,0.6V8.4M7.5,0.6V8.4M3.0,4.5H7.5M9.6,0.6H16.4M10.1,4.5H15.9M9.6,8.4H16.4M13.0,0.6V8.4M9.6,2.4V4.6" fill="none" stroke="#e0e0e0" stroke-width="1.21" stroke-opacity="1.0" stroke-linecap="square"/></svg>
  <svg class="a" style="left:69.5px;top:423px;overflow:visible" width="8" height="8"><path d="M0.6,0.6H7.5M2.4,0.6V7.5M6.0,3.0V7.5M2.4,4.8H7.5M0.6,7.5H2.4" fill="none" stroke="#777" stroke-width="1.21" stroke-opacity="1.0" stroke-linecap="square"/></svg><svg class="a" style="left:85.5px;top:422px;overflow:visible" width="9" height="9"><path d="M0.6,0.6H8.4M1.1,4.5H7.9M0.6,8.4H8.4M4.5,0.6V8.4M0.6,2.4V4.6" fill="none" stroke="#c8c8c8" stroke-width="1.21" stroke-opacity="1.0" stroke-linecap="square"/></svg><svg class="a" style="left:103.5px;top:422px;overflow:visible" width="8" height="9"><path d="M1.4,0.6V8.4M0.6,3.1H2.0M3.0,0.6H7.5M3.0,8.4H7.5M3.0,0.6V8.4M7.5,0.6V8.4M3.0,4.5H7.5" fill="none" stroke="#c8c8c8" stroke-width="1.21" stroke-opacity="1.0" stroke-linecap="square"/></svg><svg class="a" style="left:121.5px;top:422px;overflow:visible" width="9" height="9"><path d="M0.6,0.6H8.4M1.1,4.5H7.9M0.6,8.4H8.4M4.5,0.6V8.4M0.6,2.4V4.6" fill="none" stroke="#d0d0d0" stroke-width="1.21" stroke-opacity="1.0" stroke-linecap="square"/></svg>
  <svg class="a" style="left:145.5px;top:422px;overflow:visible" width="23" height="9"><path d="M0.6,0.6H10.4M0.6,8.4H10.4M0.6,0.6V8.4M10.4,0.6V8.4M0.6,4.5H10.4M5.5,0.6V8.4M12.6,0.6H22.4M12.6,8.4H22.4M12.6,0.6V8.4M22.4,0.6V8.4M12.6,4.5H22.4" fill="none" stroke="#e0e0e0" stroke-width="1.21" stroke-opacity="1.0" stroke-linecap="square"/></svg>
  <div class="a" style="left:172px;top:418px;width:23px;height:16px;background:#2e2e2e"></div>
  <svg class="a" style="left:178.5px;top:423px;overflow:visible" width="14" height="7"><path d="M0.6,0.6H3.5M0.6,6.5H3.5M0.6,0.6V6.5M3.5,0.6V6.5M0.6,3.5H3.5M5.5,0.6H8.4M5.5,6.5H8.4M5.5,0.6V6.5M8.4,0.6V6.5M5.5,3.5H8.4M10.6,1.8H10.6M10.6,4.9H10.6M11.2,3.5V6.5M11.6,0.6H13.4M12.1,0.6V6.5M11.6,3.5H13.4M13.4,3.5V6.5M11.6,6.5H13.4" fill="none" stroke="#d0d0d0" stroke-width="1.21" stroke-opacity="1.0" stroke-linecap="square"/></svg>
  <div class="a" style="left:198px;top:418px;width:16px;height:16px;background:#333"></div>
  <div class="a" style="left:35px;top:433px;width:193px;height:2px;background:#3a3a3a"></div>
  <div class="a" style="left:228px;top:435px;width:38px;height:367px;background:#3e3e3e"></div>
  <div class="a" style="left:228px;top:435px;width:5px;height:367px;background:#363636"></div>
<div class="a" style="left:35px;top:435px;width:193px;height:32px;background:#4a4a4a;border-bottom:1px solid #3c3c3c"></div>
<div class="a" style="left:42px;top:447px;width:10px;height:8px;border:2px solid #e4e4e4;border-radius:50%;background:#3a3a3a"></div>
<svg class="a" style="left:58px;top:439px" width="25" height="26"><rect width="25" height="26" fill="#f6ecdc"/><path d="M0,21 Q12,14 25,6 V26 H0 Z" fill="#c87a28"/><path d="M0,16 Q12,9 25,1 V6 Q12,14 0,21 Z" fill="#fff"/><rect x="0" y="23" width="25" height="3" fill="#e0a050"/></svg>
<svg class="a" style="left:90px;top:446.5px;overflow:visible" width="15" height="9"><path d="M0.6,0.6H6.5M0.6,8.4H6.5M0.6,0.6V8.4M6.5,0.6V8.4M0.6,4.5H6.5M3.5,0.6V8.4M8.6,0.6H14.4M8.6,8.4H14.4M8.6,0.6V8.4M14.4,0.6V8.4M8.6,4.5H14.4M11.5,0.6V8.4" fill="none" stroke="#e8e8e8" stroke-width="1.21" stroke-opacity="1.0" stroke-linecap="square"/></svg>
<div class="a" style="left:110px;top:445px;width:50px;height:12px;background:#444"></div>
<div class="a" style="left:35px;top:467px;width:193px;height:40px;background:#4a4a4a;border-bottom:1px solid #3c3c3c"></div>
<div class="a" style="left:42px;top:483px;width:10px;height:8px;border:2px solid #e4e4e4;border-radius:50%;background:#3a3a3a"></div>
<div class="a" style="left:58px;top:472px;width:25px;height:31px;background:linear-gradient(160deg,#ac6612,#9e5a0c);border:1.5px solid #6e4418"></div>
<svg class="a" style="left:90px;top:482.5px;overflow:visible" width="22" height="9"><path d="M0.6,0.6H6.3M0.6,8.4H6.3M0.6,0.6V8.4M6.3,0.6V8.4M0.6,4.5H6.3M9.1,0.6V8.4M8.4,3.1H9.4M10.4,0.6H14.1M10.4,8.4H14.1M10.4,0.6V8.4M14.1,0.6V8.4M10.4,4.5H14.1M16.2,0.6H21.9M16.7,4.5H21.4M16.2,8.4H21.9M19.1,0.6V8.4M16.2,2.4V4.6" fill="none" stroke="#e8e8e8" stroke-width="1.21" stroke-opacity="1.0" stroke-linecap="square"/></svg>
<div class="a" style="left:35px;top:507px;width:193px;height:39px;background:#4a4a4a;border-bottom:1px solid #3c3c3c"></div>
<div class="a" style="left:42px;top:522px;width:10px;height:8px;border:2px solid #e4e4e4;border-radius:50%;background:#3a3a3a"></div>
<div class="a" style="left:58px;top:512px;width:25px;height:30px;background:linear-gradient(160deg,#ac6612,#9e5a0c);border:1.5px solid #6e4418"></div>
<svg class="a" style="left:90px;top:521.5px;overflow:visible" width="22" height="9"><path d="M0.6,2.2H1.7M0.6,6.3H1.7M1.1,4.5V8.4M2.7,0.6H6.3M3.2,0.6V8.4M2.7,4.5H6.3M6.3,4.5V8.4M2.7,8.4H6.3M8.4,0.6H14.1M8.4,8.4H14.1M8.4,0.6V8.4M14.1,0.6V8.4M8.4,4.5H14.1M11.2,0.6V8.4M16.2,0.6H21.9M17.7,0.6V8.4M20.8,3.2V8.4M17.7,5.4H21.9M16.2,8.4H17.7" fill="none" stroke="#e8e8e8" stroke-width="1.21" stroke-opacity="1.0" stroke-linecap="square"/></svg>
<svg class="a" style="left:207px;top:522px;overflow:visible" width="8" height="8"><path d="M0.6,0.6H7.5M0.6,7.5H7.5M0.6,0.6V7.5M7.5,0.6V7.5M0.6,4.0H7.5" fill="none" stroke="#c8c8c8" stroke-width="1.21" stroke-opacity="1.0" stroke-linecap="square"/></svg>
<div class="a" style="left:35px;top:546px;width:193px;height:39px;background:#4a4a4a;border-bottom:1px solid #3c3c3c"></div>
<div class="a" style="left:42px;top:561px;width:10px;height:8px;border:2px solid #e4e4e4;border-radius:50%;background:#3a3a3a"></div>
<div class="a" style="left:58px;top:551px;width:25px;height:30px;background:linear-gradient(160deg,#ac6612,#9e5a0c);border:1.5px solid #6e4418"></div>
<svg class="a" style="left:90px;top:560.5px;overflow:visible" width="30" height="9"><path d="M1.2,0.6V8.4M0.6,3.1H1.6M2.6,0.6H6.2M2.6,8.4H6.2M2.6,0.6V8.4M6.2,0.6V8.4M2.6,4.5H6.2M9.0,0.6V8.4M8.3,3.1H9.3M10.3,0.6H13.9M10.3,8.4H13.9M10.3,0.6V8.4M13.9,0.6V8.4M10.3,4.5H13.9M16.1,0.6H21.7M16.1,8.4H21.7M16.1,0.6V8.4M21.7,0.6V8.4M16.1,4.5H21.7M18.9,0.6V8.4M24.5,0.6V8.4M23.8,3.1H24.8M25.8,0.6H29.4M25.8,8.4H29.4M25.8,0.6V8.4M29.4,0.6V8.4M25.8,4.5H29.4" fill="none" stroke="#e8e8e8" stroke-width="1.21" stroke-opacity="1.0" stroke-linecap="square"/></svg>
<svg class="a" style="left:207px;top:561px;overflow:visible" width="8" height="8"><path d="M0.6,0.6H7.5M0.6,7.5H7.5M0.6,0.6V7.5M7.5,0.6V7.5M0.6,4.0H7.5" fill="none" stroke="#c8c8c8" stroke-width="1.21" stroke-opacity="1.0" stroke-linecap="square"/></svg>
<div class="a" style="left:35px;top:585px;width:193px;height:41px;background:#4a4a4a;border-bottom:1px solid #3c3c3c"></div>
<div class="a" style="left:42px;top:601px;width:10px;height:8px;border:2px solid #e4e4e4;border-radius:50%;background:#3a3a3a"></div>
<svg class="a" style="left:58px;top:590px" width="25" height="32"><rect width="25" height="32" fill="#f6f3ee"/><path d="M4,32 Q18,24 25,16 V32 Z" fill="#c8782a"/></svg>
<svg class="a" style="left:90px;top:600.5px;overflow:visible" width="15" height="9"><path d="M0.6,0.6H6.5M0.6,8.4H6.5M0.6,0.6V8.4M6.5,0.6V8.4M0.6,4.5H6.5M8.6,2.2H9.8M8.6,6.3H9.8M9.2,4.5V8.4M10.8,0.6H14.4M11.3,0.6V8.4M10.8,4.5H14.4M14.4,4.5V8.4M10.8,8.4H14.4" fill="none" stroke="#e8e8e8" stroke-width="1.21" stroke-opacity="1.0" stroke-linecap="square"/></svg>
<svg class="a" style="left:207px;top:601px;overflow:visible" width="8" height="8"><path d="M0.6,0.6H7.5M2.4,0.6V7.5M6.0,3.0V7.5M2.4,4.8H7.5M0.6,7.5H2.4" fill="none" stroke="#c8c8c8" stroke-width="1.21" stroke-opacity="1.0" stroke-linecap="square"/></svg>
<div class="a" style="left:35px;top:626px;width:193px;height:37px;background:#4a4a4a;border-bottom:1px solid #3c3c3c"></div>
<div class="a" style="left:82px;top:627px;width:145px;height:35px;background:#58677c"></div>
<div class="a" style="left:42px;top:640px;width:10px;height:8px;border:2px solid #e4e4e4;border-radius:50%;background:#3a3a3a"></div>
<div class="a" style="left:58px;top:631px;width:25px;height:28px;background:#f2f2f2;border:1.5px solid #222"></div>
<svg class="a" style="left:90px;top:639.5px;overflow:visible" width="22" height="9"><path d="M0.6,2.2H1.7M0.6,6.3H1.7M1.1,4.5V8.4M2.7,0.6H6.3M3.2,0.6V8.4M2.7,4.5H6.3M6.3,4.5V8.4M2.7,8.4H6.3M8.4,2.2H9.6M8.4,6.3H9.6M9.0,4.5V8.4M10.6,0.6H14.1M11.1,0.6V8.4M10.6,4.5H14.1M14.1,4.5V8.4M10.6,8.4H14.1M16.2,0.6H21.9M16.7,4.5H21.4M16.2,8.4H21.9M19.1,0.6V8.4M16.2,2.4V4.6" fill="none" stroke="#e8e8e8" stroke-width="1.21" stroke-opacity="1.0" stroke-linecap="square"/></svg>
<svg class="a" style="left:207px;top:640px;overflow:visible" width="8" height="8"><path d="M0.6,0.6H7.5M0.6,7.5H7.5M0.6,0.6V7.5M7.5,0.6V7.5M0.6,4.0H7.5" fill="none" stroke="#c8c8c8" stroke-width="1.21" stroke-opacity="1.0" stroke-linecap="square"/></svg>
<div class="a" style="left:35px;top:663px;width:193px;height:38px;background:#4a4a4a;border-bottom:1px solid #3c3c3c"></div>
<div class="a" style="left:82px;top:664px;width:145px;height:36px;background:#58677c"></div>
<div class="a" style="left:42px;top:678px;width:10px;height:8px;border:2px solid #e4e4e4;border-radius:50%;background:#3a3a3a"></div>
<div class="a" style="left:58px;top:668px;width:25px;height:29px;background:#f2f2f2;border:1.5px solid #222"></div>
<svg class="a" style="left:90px;top:677.5px;overflow:visible" width="22" height="9"><path d="M0.6,2.2H1.7M0.6,6.3H1.7M1.1,4.5V8.4M2.7,0.6H6.3M3.2,0.6V8.4M2.7,4.5H6.3M6.3,4.5V8.4M2.7,8.4H6.3M8.4,0.6H14.1M8.4,8.4H14.1M8.4,0.6V8.4M14.1,0.6V8.4M8.4,4.5H14.1M16.2,0.6H21.9M16.2,8.4H21.9M16.2,0.6V8.4M21.9,0.6V8.4M16.2,4.5H21.9M19.1,0.6V8.4" fill="none" stroke="#e8e8e8" stroke-width="1.21" stroke-opacity="1.0" stroke-linecap="square"/></svg>
<svg class="a" style="left:207px;top:678px;overflow:visible" width="8" height="8"><path d="M1.4,0.6V7.5M0.6,2.8H2.0M3.0,0.6H7.5M3.0,7.5H7.5M3.0,0.6V7.5M7.5,0.6V7.5M3.0,4.0H7.5" fill="none" stroke="#c8c8c8" stroke-width="1.21" stroke-opacity="1.0" stroke-linecap="square"/></svg>
<div class="a" style="left:35px;top:701px;width:193px;height:38px;background:#4a4a4a;border-bottom:1px solid #3c3c3c"></div>
<div class="a" style="left:42px;top:716px;width:10px;height:8px;border:2px solid #e4e4e4;border-radius:50%;background:#3a3a3a"></div>
<div class="a" style="left:58px;top:706px;width:25px;height:29px;background:linear-gradient(160deg,#ac6612,#9e5a0c);border:1.5px solid #6e4418"></div>
<svg class="a" style="left:90px;top:715.5px;overflow:visible" width="15" height="9"><path d="M0.6,0.6H6.5M2.1,0.6V8.4M5.2,3.2V8.4M2.1,5.4H6.5M0.6,8.4H2.1M8.6,0.6H14.4M8.6,8.4H14.4M8.6,0.6V8.4M14.4,0.6V8.4M8.6,4.5H14.4M11.5,0.6V8.4" fill="none" stroke="#e8e8e8" stroke-width="1.21" stroke-opacity="1.0" stroke-linecap="square"/></svg>
<svg class="a" style="left:207px;top:716px;overflow:visible" width="8" height="8"><path d="M0.6,0.6H7.5M2.4,0.6V7.5M6.0,3.0V7.5M2.4,4.8H7.5M0.6,7.5H2.4" fill="none" stroke="#c8c8c8" stroke-width="1.21" stroke-opacity="1.0" stroke-linecap="square"/></svg>
<div class="a" style="left:35px;top:739px;width:193px;height:39px;background:#4a4a4a;border-bottom:1px solid #3c3c3c"></div>
<div class="a" style="left:42px;top:754px;width:10px;height:8px;border:2px solid #e4e4e4;border-radius:50%;background:#3a3a3a"></div>
<svg class="a" style="left:58px;top:744px" width="25" height="30"><rect width="25" height="30" fill="#f6f3ee"/><path d="M2,24 Q8,16 18,6 Q24,2 23,8 Q14,18 6,27 Q2,30 2,24 Z" fill="#d08030"/></svg>
<svg class="a" style="left:90px;top:753.5px;overflow:visible" width="15" height="9"><path d="M0.6,2.2H1.8M0.6,6.3H1.8M1.1,4.5V8.4M2.8,0.6H6.5M3.3,0.6V8.4M2.8,4.5H6.5M6.5,4.5V8.4M2.8,8.4H6.5M8.6,0.6H14.4M10.1,0.6V8.4M13.2,3.2V8.4M10.1,5.4H14.4M8.6,8.4H10.1" fill="none" stroke="#e8e8e8" stroke-width="1.21" stroke-opacity="1.0" stroke-linecap="square"/></svg>
<svg class="a" style="left:207px;top:754px;overflow:visible" width="8" height="8"><path d="M0.6,0.6H7.5M2.4,0.6V7.5M6.0,3.0V7.5M2.4,4.8H7.5M0.6,7.5H2.4" fill="none" stroke="#c8c8c8" stroke-width="1.21" stroke-opacity="1.0" stroke-linecap="square"/></svg>
<div class="a" style="left:35px;top:778px;width:234px;height:24px;background:#3c3c3c"></div>
<svg class="a" style="left:78px;top:781px" width="150" height="18" viewBox="0 0 150 18">
 <rect x="2" y="4" width="11" height="10" fill="none" stroke="#7a7a7a" stroke-width="1.3"/>
 <path d="M24,14 l8,-10 q3,-2 4,1 l-6,9 z" fill="#6a6a6a"/>
 <path d="M50,4 a6,6 0 1 0 6,6" fill="none" stroke="#e8e8e8" stroke-width="2"/><path d="M54,2 l4,4 l-5,1 z" fill="#e8e8e8"/>
 <path d="M70,13 l5,-10 l6,3 l-5,10 z" fill="none" stroke="#e8e8e8" stroke-width="1.8"/>
 <path d="M89,13 h14 v-3 q-2,-6 -7,-6 q-5,0 -7,5 z" fill="none" stroke="#e8e8e8" stroke-width="1.8"/><rect x="89" y="11" width="14" height="3" fill="#e8e8e8"/>
 <path d="M112,5 h5 l2,2 h6 v9 h-13 z" fill="#e0e0e0"/><rect x="114" y="9" width="9" height="2" fill="#555"/>
 <rect x="135" y="3" width="10" height="13" fill="none" stroke="#e0e0e0" stroke-width="1.6"/><path d="M137,7 h6 M137,10 h6 M137,13 h6" stroke="#e0e0e0" stroke-width="1.2"/>
</svg>

  
</div>
<!-- status bar + h scroll -->
<div class="a" style="left:0;top:790px;width:930px;height:19px;background:#303030;transform:skewY(0.95deg);transform-origin:0 0"></div>
<div class="a" style="left:0;top:790px;width:178px;height:18px;background:#383838"></div>
<svg class="a" style="left:8px;top:796px;overflow:visible" width="24" height="8"><path d="M0.6,0.6H6.8M0.6,8.0H6.8M0.6,0.6V8.0M6.8,0.6V8.0M0.6,4.2H6.8M8.9,0.6H15.1M9.4,4.2H14.6M8.9,8.0H15.1M12.0,0.6V8.0M8.9,2.2V4.4M17.2,0.6H23.4M17.2,8.0H23.4M17.2,0.6V8.0M23.4,0.6V8.0M17.2,4.2H23.4" fill="none" stroke="#cfcfcf" stroke-width="1.21" stroke-opacity="1.0" stroke-linecap="square"/></svg>
<div class="a" style="left:42px;top:792px;width:1px;height:13px;background:#555"></div>
<svg class="a" style="left:61px;top:796px;overflow:visible" width="69" height="8"><path d="M0.6,0.6H8.4M2.7,0.6V8.0M6.8,3.1V8.0M2.7,5.1H8.4M0.6,8.0H2.7M10.6,2.1H12.6M10.6,5.9H12.6M11.2,4.2V8.0M13.6,0.6H18.4M14.1,0.6V8.0M13.6,4.2H18.4M18.4,4.2V8.0M13.6,8.0H18.4M20.6,2.1H22.6M20.6,5.9H22.6M21.2,4.2V8.0M23.6,0.6H28.4M24.1,0.6V8.0M23.6,4.2H28.4M28.4,4.2V8.0M23.6,8.0H28.4M30.6,0.6H38.5M30.6,8.0H38.5M30.6,0.6V8.0M38.5,0.6V8.0M30.6,4.2H38.5M34.5,0.6V8.0M40.5,0.6H48.5M41.0,4.2H48.0M40.5,8.0H48.5M44.5,0.6V8.0M40.5,2.2V4.4M50.5,0.6H58.5M50.5,8.0H58.5M50.5,0.6V8.0M58.5,0.6V8.0M50.5,4.2H58.5M60.5,0.6H68.5M60.5,8.0H68.5M60.5,0.6V8.0M68.5,0.6V8.0M60.5,4.2H68.5M64.5,0.6V8.0" fill="none" stroke="#cfcfcf" stroke-width="1.21" stroke-opacity="1.0" stroke-linecap="square"/></svg>
<div class="a" style="left:146px;top:792px;width:1px;height:13px;background:#555"></div>
<svg class="a" style="left:170px;top:798px" width="6" height="6"><path d="M0,6 L6,6 L0,0 Z" fill="#bbb"/></svg>
<div class="a" style="left:385px;top:800px;width:220px;height:13px;border-radius:3px;background:linear-gradient(#9a9a9a,#7e7e7e);transform:skewY(0.95deg)"></div>
<div class="a" style="left:909px;top:814px;width:6px;height:7px;background:#666"></div>
<div class="a" style="left:922px;top:816px;width:4px;height:4px;background:#555"></div>
<!-- dock -->
<div class="a" style="left:0;top:810px;width:310px;height:54px;background:#3a3d42"></div>
<svg class="a" style="left:0;top:810px" width="380" height="54" viewBox="0 810 380 54">
 <defs>
  <linearGradient id="g1" x1="0" y1="0" x2="0" y2="1"><stop offset="0" stop-color="#2aa0f4"/><stop offset="1" stop-color="#1680e0"/></linearGradient>
  <linearGradient id="g3" x1="0" y1="0" x2="0" y2="1"><stop offset="0" stop-color="#f7a02c"/><stop offset="0.55" stop-color="#d8c040"/><stop offset="1" stop-color="#70c850"/></linearGradient>
  <linearGradient id="g4" x1="0" y1="0" x2="1" y2="1"><stop offset="0" stop-color="#9aa0b0"/><stop offset="1" stop-color="#6a8cb8"/></linearGradient>
  <linearGradient id="g6" x1="0" y1="0" x2="1" y2="1"><stop offset="0" stop-color="#d8e8f8"/><stop offset="1" stop-color="#a8d0f8"/></linearGradient>
  <linearGradient id="g6b" x1="0" y1="0" x2="0" y2="1"><stop offset="0" stop-color="#ffa000"/><stop offset="0.3" stop-color="#e0f000"/><stop offset="0.55" stop-color="#20d040"/><stop offset="0.8" stop-color="#10a0e0"/><stop offset="1" stop-color="#1040e0"/></linearGradient>
  <linearGradient id="g7" x1="0" y1="0" x2="0" y2="1"><stop offset="0" stop-color="#7a6450"/><stop offset="1" stop-color="#4e3824"/></linearGradient>
  <linearGradient id="g2r" x1="0" y1="0" x2="1" y2="1"><stop offset="0" stop-color="#f8e000"/><stop offset="0.35" stop-color="#30d020"/><stop offset="0.7" stop-color="#10a8e0"/><stop offset="1" stop-color="#1040d0"/></linearGradient>
  <linearGradient id="g4r" x1="0" y1="0" x2="1" y2="1"><stop offset="0" stop-color="#e040e0"/><stop offset="0.5" stop-color="#8060f0"/><stop offset="1" stop-color="#40e0f0"/></linearGradient>
 </defs>
 <!-- icon1 -->
 <rect x="5" y="815" width="41" height="42" rx="2" fill="url(#g1)"/>
 <path d="M15,820 h22 v33 h-6 v-27 h-16 z" fill="#f4fbff"/>
 <path d="M16,829 h12 v2 h-12 z M26,829 h2 v22 h-2 z" fill="#d8efff"/>
 <!-- icon2 -->
 <rect x="57" y="816" width="41" height="41" rx="2" fill="#e6e6ea"/>
 <circle cx="78" cy="835" r="16" fill="url(#g2r)"/>
 <path d="M72,829 q6,-5 12,0 v8 q0,3 -3,4 v9 h-6 v-9 q-3,-1 -3,-4 z" fill="#f6f6f8"/>
 <!-- icon3 -->
 <rect x="110" y="816" width="40" height="41" rx="2" fill="url(#g3)"/>
 <rect x="117" y="825" width="27" height="23" fill="#fafaf4"/>
 <path d="M119,831 q11,-4 22,0 q1,8 -11,9 q-12,0 -11,-9 z" fill="#38d4ee"/>
 <!-- icon4 -->
 <rect x="163" y="817" width="40" height="41" rx="2" fill="url(#g4)"/>
 <circle cx="183" cy="837" r="14" fill="none" stroke="url(#g4r)" stroke-width="4"/>
 <path d="M176,839 a7,7 0 1 1 12,3" fill="none" stroke="#e0f8ff" stroke-width="2.5"/>
 <!-- icon5 -->
 <rect x="215" y="818" width="40" height="40" rx="2" fill="#4a4540"/>
 <!-- icon6 -->
 <rect x="267" y="818" width="40" height="41" rx="1" fill="url(#g6)"/>
 <rect x="273" y="824" width="28" height="30" fill="url(#g6b)"/>
 <rect x="280" y="832" width="14" height="14" fill="#30b8a0" opacity="0.7"/>
 <!-- icon7 -->
 <rect x="313" y="815" width="53" height="48" fill="#242220"/>
 <rect x="319" y="818" width="41" height="42" rx="3" fill="url(#g7)"/>
 <path d="M326,836 q14,-22 28,0" fill="none" stroke="#f0e8e0" stroke-width="2.5"/>
 <path d="M331,836 h18 l2,20 h-22 z" fill="none" stroke="#f0e8e0" stroke-width="2.2"/>
 <!-- underlines -->
 <rect x="212" y="861" width="98" height="2" fill="#f4f4f4"/>
 <rect x="313" y="861" width="52" height="2" fill="#f4f4f4"/>
</svg>
<div class="a" style="left:219px;top:822px;width:31px;height:31px;border-radius:50%;background:conic-gradient(from 0deg,#f8d000,#ff7a00,#ff2040,#e020e0,#7040ff,#2080ff,#00d0f0,#20e040,#a0e000,#f8d000)"></div>
<div class="a" style="left:226px;top:829px;width:17px;height:17px;border-radius:50%;background:#f4f4fa"></div>
<div class="a" style="left:230px;top:833px;width:9px;height:9px;border-radius:50%;border:2px solid #444"></div>

</body></html>
